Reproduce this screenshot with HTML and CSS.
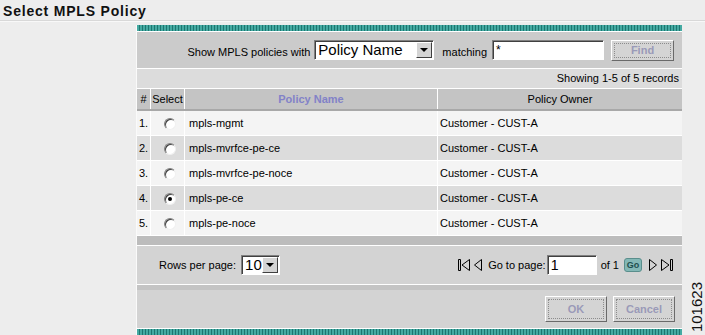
FILE: index.html
```html
<!DOCTYPE html>
<html lang="en">
<head>
    <meta charset="UTF-8">
    <title>Select MPLS Policy</title>
    <link rel="stylesheet" href="styles.css">
</head>
<body>
    <h1 class="page-title">Select MPLS Policy</h1>

    <div class="layout">
        <div class="panel">
            <div class="stripe"></div>

            <div class="filter">
                <span>Show MPLS policies with</span>
                <div class="select select-wide"><span>Policy Name</span><i class="drop"></i></div>
                <span class="matching">matching</span>
                <div class="textbox textbox-filter">*</div>
                <button class="btn btn-find">Find</button>
            </div>

            <div class="records">Showing 1-5 of 5 records</div>

            <table class="grid">
                <thead>
                    <tr>
                        <th class="col-num">#</th>
                        <th class="col-sel">Select</th>
                        <th class="col-name sorted">Policy Name</th>
                        <th class="col-owner">Policy Owner</th>
                    </tr>
                </thead>
                <tbody>
                    <tr>
                        <td>1.</td>
                        <td class="radio-cell"><span class="radio"></span></td>
                        <td class="name">mpls-mgmt</td>
                        <td>Customer - CUST-A</td>
                    </tr>
                    <tr>
                        <td>2.</td>
                        <td class="radio-cell"><span class="radio"></span></td>
                        <td class="name">mpls-mvrfce-pe-ce</td>
                        <td>Customer - CUST-A</td>
                    </tr>
                    <tr>
                        <td>3.</td>
                        <td class="radio-cell"><span class="radio"></span></td>
                        <td class="name">mpls-mvrfce-pe-noce</td>
                        <td>Customer - CUST-A</td>
                    </tr>
                    <tr>
                        <td>4.</td>
                        <td class="radio-cell"><span class="radio checked"></span></td>
                        <td class="name">mpls-pe-ce</td>
                        <td>Customer - CUST-A</td>
                    </tr>
                    <tr>
                        <td>5.</td>
                        <td class="radio-cell"><span class="radio"></span></td>
                        <td class="name">mpls-pe-noce</td>
                        <td>Customer - CUST-A</td>
                    </tr>
                </tbody>
            </table>

            <div class="grid-foot"></div>

            <div class="pager">
                <div class="rows-per-page">
                    <span>Rows per page:</span>
                    <div class="select select-small"><span>10</span><i class="drop"></i></div>
                </div>
                <div class="nav">
                    <svg class="nav-icon" width="14" height="14" viewBox="0 0 14 14">
                        <path d="M1.5 1.5v11h2v-11z M12.5 1.5L5 7l7.5 5.5z" fill="none" stroke="#000" stroke-width="1"/>
                    </svg>
                    <svg class="nav-icon" width="10" height="14" viewBox="0 0 10 14">
                        <path d="M8.5 1.5L1.5 7l7 5.5z" fill="none" stroke="#000" stroke-width="1"/>
                    </svg>
                    <span class="goto">Go to page:</span>
                    <div class="textbox textbox-page">1</div>
                    <span class="of">of 1</span>
                    <button class="go">Go</button>
                    <svg class="nav-icon" width="10" height="14" viewBox="0 0 10 14">
                        <path d="M1.5 1.5L8.5 7l-7 5.5z" fill="none" stroke="#000" stroke-width="1"/>
                    </svg>
                    <svg class="nav-icon" width="14" height="14" viewBox="0 0 14 14">
                        <path d="M1.5 1.5L9 7l-7.5 5.5z M10.5 1.5v11h2v-11z" fill="none" stroke="#000" stroke-width="1"/>
                    </svg>
                </div>
            </div>

            <div class="pager-foot"></div>

            <div class="actions">
                <button class="btn btn-action">OK</button>
                <button class="btn btn-action">Cancel</button>
            </div>

            <div class="stripe stripe-bottom"></div>
        </div>

        <div class="figure-id">101623</div>
    </div>
</body>
</html>
```

FILE: styles.css
```css
body {
    margin: 0;
    background-color: #ededed;
    font-family: 'Liberation Sans', Arial, sans-serif;
    font-size: 11px;
    color: #000;
    height: 335px;
    overflow: hidden;
}

.page-title {
    margin: 0;
    height: 21px;
    padding: 3px 0 0 3px;
    box-sizing: border-box;
    font-size: 14px;
    font-weight: bold;
    letter-spacing: 0.8px;
    color: #111;
    border-bottom: 1px solid #d8d8d8;
    box-shadow: 0 1px 0 #f8f8f8;
}

.layout {
    display: flex;
    padding: 4px 0 0 136px;
}

.panel {
    width: 548px;
    border-left: 1px solid #fafafa;
    background-color: #cccccc;
}

.stripe {
    height: 6px;
    background: repeating-linear-gradient(90deg, #45aaa2 0 2px, #1d7670 2px 3px);
    border-bottom: 1px solid #fff;
}

.stripe-bottom {
    border-bottom: none;
    border-top: 1px solid #fff;
}

/* filter row */
.filter {
    height: 36px;
    display: flex;
    align-items: center;
    justify-content: flex-end;
    padding-right: 8px;
    background-color: #cbcbcb;
    border-bottom: 1px solid #fff;
}

.filter > span:first-child {
    margin-right: 4px;
    margin-top: 3px;
}

.matching {
    margin: 3px 5px 0 8px;
}

.select {
    display: flex;
    align-items: center;
    background-color: #fff;
    border-top: 1px solid #808080;
    border-left: 1px solid #808080;
    border-right: 1px solid #fff;
    border-bottom: 1px solid #fff;
    box-shadow: inset 1px 1px 0 #404040;
    box-sizing: border-box;
    height: 20px;
    font-size: 15px;
}

.select span {
    flex: 1;
    padding-left: 3px;
    line-height: 18px;
}

.select-wide {
    width: 120px;
}

.select-small {
    width: 39px;
}

.drop {
    width: 16px;
    height: 16px;
    margin-right: 1px;
    background-color: #d4d4d4;
    border-top: 1px solid #fff;
    border-left: 1px solid #fff;
    border-right: 1px solid #404040;
    border-bottom: 1px solid #404040;
    box-sizing: border-box;
    position: relative;
}

.drop::after {
    content: '';
    position: absolute;
    left: 3px;
    top: 5px;
    border-left: 4px solid transparent;
    border-right: 4px solid transparent;
    border-top: 4px solid #000;
}

.textbox {
    background-color: #fff;
    border-top: 1px solid #808080;
    border-left: 1px solid #808080;
    border-right: 1px solid #fff;
    border-bottom: 1px solid #fff;
    box-shadow: inset 1px 1px 0 #404040;
    box-sizing: border-box;
    height: 20px;
    padding-left: 3px;
}

.textbox-filter {
    width: 112px;
    font-size: 12px;
    line-height: 18px;
}

.textbox-page {
    width: 50px;
    font-size: 14px;
    line-height: 18px;
}

.btn {
    font-family: inherit;
    font-weight: bold;
    color: #9a9ab8;
    background-color: #d4d4d4;
    border-top: 1px solid #fff;
    border-left: 1px solid #fff;
    border-right: 1px solid #6a6a6a;
    border-bottom: 1px solid #6a6a6a;
    outline: 1px dotted #8c8c8c;
    outline-offset: -4px;
    padding: 0;
}

.btn-find {
    width: 63px;
    height: 21px;
    margin-left: 7px;
    font-size: 11px;
}

/* grid */
.records {
    height: 19px;
    line-height: 19px;
    text-align: right;
    padding-right: 3px;
    background-color: #dcdcdc;
    border-bottom: 1px solid #fff;
}

.grid {
    width: 100%;
    border-collapse: collapse;
    table-layout: fixed;
}

.grid th {
    height: 20px;
    padding: 0;
    font-weight: normal;
    background-color: #c4c4c4;
    border-left: 1px solid #fff;
    border-bottom: 2px solid #a8a8a8;
}

.grid th:first-child,
.grid td:first-child {
    border-left: none;
}

.grid th.sorted {
    color: #8282c8;
    font-weight: bold;
}

.col-num { width: 13px; }
.col-sel { width: 33px; }
.col-name { width: 252px; }

.grid td {
    height: 24px;
    padding: 0 0 0 2px;
    border-left: 1px solid #fff;
    border-bottom: 1px solid #fff;
    background-color: #f4f4f4;
    white-space: nowrap;
}

.grid tbody tr:nth-child(even) td {
    background-color: #dcdcdc;
}

.grid td.name {
    padding-left: 4px;
}

.radio-cell {
    text-align: center;
}

.radio {
    display: inline-block;
    width: 12px;
    height: 12px;
    box-sizing: border-box;
    border-radius: 50%;
    background-color: #fff;
    border: 1px solid;
    border-color: #808080 #f0f0f0 #f0f0f0 #808080;
    box-shadow: inset 1px 1px 0 #404040;
    vertical-align: middle;
    position: relative;
    margin-left: 3px;
}

.radio.checked::after {
    content: '';
    position: absolute;
    left: 3px;
    top: 3px;
    width: 4px;
    height: 4px;
    border-radius: 50%;
    background-color: #000;
}

.grid-foot {
    height: 9px;
    background-color: #bcbcbc;
    border-bottom: 1px solid #fff;
}

/* pager */
.pager {
    height: 38px;
    display: flex;
    align-items: center;
    justify-content: space-between;
    padding: 0 7px 0 22px;
    background-color: #d3d3d3;
    border-bottom: 1px solid #fff;
}

.rows-per-page {
    display: flex;
    align-items: center;
    gap: 5px;
}

.nav {
    display: flex;
    align-items: center;
}

.nav-icon {
    display: block;
    margin: 0 1px;
}

.goto {
    margin: 0 1px 0 4px;
}

.of {
    margin: 0 5px 0 4px;
}

.go {
    width: 18px;
    height: 14px;
    padding: 0;
    margin-right: 5px;
    font-family: inherit;
    font-size: 9px;
    font-weight: bold;
    color: #1f4f4f;
    background-color: #83b8b6;
    border: 1px solid #5a8e8c;
    border-radius: 3px;
}

.pager-foot {
    height: 5px;
    background-color: #c4c4c4;
}

.actions {
    height: 38px;
    display: flex;
    align-items: center;
    justify-content: flex-end;
    gap: 6px;
    padding-right: 7px;
    background-color: #d3d3d3;
}

.btn-action {
    width: 62px;
    height: 26px;
    font-size: 11px;
}

.figure-id {
    align-self: flex-end;
    margin: 0 0 3px 6px;
    writing-mode: vertical-rl;
    transform: rotate(180deg);
    font-size: 15px;
    color: #111;
}
```
